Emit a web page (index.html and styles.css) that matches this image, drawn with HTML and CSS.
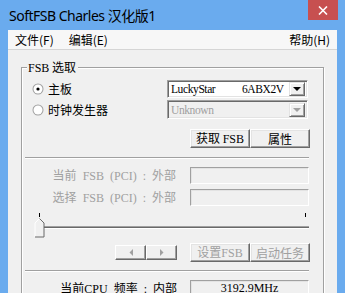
FILE: index.html
```html
<!DOCTYPE html>
<html lang="zh-CN">
<head>
    <meta charset="UTF-8">
    <title>SoftFSB Charles 汉化版1</title>
    <link rel="stylesheet" href="styles.css">
</head>
<body>
    <div class="window">
        <!-- Title bar -->
        <div class="titlebar">
            <span class="title">SoftFSB Charles 汉化版1</span>
            <span class="close">
                <svg width="10" height="9" viewBox="0 0 10 9"><path d="M1 0.5 L9 8.5 M9 0.5 L1 8.5" stroke="#fff" stroke-width="1.6"/></svg>
            </span>
        </div>

        <div class="client">
            <!-- Menu -->
            <div class="menubar">
                <span class="menu-item">文件(F)</span>
                <span class="menu-item">编辑(E)</span>
                <span class="menu-item help">帮助(H)</span>
            </div>

            <!-- FSB group -->
            <div class="group">
                <span class="legend"><span class="m">FSB</span> 选取</span>

                <div class="row row-first">
                    <label class="opt">
                        <svg class="radio" width="12" height="12" viewBox="0 0 12 12">
                            <circle cx="6" cy="6" r="5.5" fill="#a0a0a0"/>
                            <circle cx="6" cy="6" r="4.5" fill="#fff"/>
                            <circle cx="6" cy="6" r="1.6" fill="#000"/>
                        </svg>
                        主板
                    </label>
                    <div class="combo">
                        <span class="combo-text m"><span class="board">LuckyStar</span>6ABX2V</span>
                        <span class="combo-btn"><span class="arrow"></span></span>
                    </div>
                </div>

                <div class="row row-second">
                    <label class="opt">
                        <svg class="radio" width="12" height="12" viewBox="0 0 12 12">
                            <circle cx="6" cy="6" r="5.5" fill="#a0a0a0"/>
                            <circle cx="6" cy="6" r="4.5" fill="#fff"/>
                        </svg>
                        时钟发生器
                    </label>
                    <div class="combo disabled">
                        <span class="combo-text m">Unknown</span>
                        <span class="combo-btn"><span class="arrow"></span></span>
                    </div>
                </div>

                <div class="btn-row">
                    <button class="btn">获取 <span class="m">FSB</span></button>
                    <button class="btn">属性</button>
                </div>

                <div class="sep"></div>

                <div class="field-row first">
                    <span class="label">当前<span class="m"> FSB (PCI) : </span>外部</span>
                    <span class="field"></span>
                </div>
                <div class="field-row">
                    <span class="label">选择<span class="m"> FSB (PCI) : </span>外部</span>
                    <span class="field"></span>
                </div>

                <svg class="slider" width="290" height="25" viewBox="0 0 290 25">
                    <rect x="17" y="0" width="1" height="4" fill="#000"/>
                    <rect x="283" y="0" width="1" height="4" fill="#000"/>
                    <rect x="15" y="13" width="272" height="1" fill="#a0a0a0"/>
                    <rect x="15" y="14" width="272" height="1" fill="#696969"/>
                    <rect x="15" y="15" width="272" height="1" fill="#fff"/>
                    <polygon points="13,10 17.5,5.5 22,10 22,24 13,24" fill="#f0f0f0"/>
                    <polyline points="13,24 13,10 17.5,5.5" fill="none" stroke="#fff" stroke-width="1"/>
                    <polyline points="17.5,5.5 22,10 22,24 13,24" fill="none" stroke="#696969" stroke-width="1"/>
                </svg>

                <div class="nav-row">
                    <div class="nav">
                        <button class="small-btn">
                            <svg width="4" height="7" viewBox="0 0 4 7"><polygon points="4,0 4,7 0.5,3.5" fill="#a0a0a0"/></svg>
                        </button>
                        <button class="small-btn">
                            <svg width="4" height="7" viewBox="0 0 4 7"><polygon points="0,0 0,7 3.5,3.5" fill="#a0a0a0"/></svg>
                        </button>
                    </div>
                    <button class="btn off">设置<span class="m">FSB</span></button>
                    <button class="btn off">启动任务</button>
                </div>

                <div class="sep sep-low"></div>

                <div class="field-row cpu">
                    <span class="label">当前<span class="m">CPU </span>频率<span class="m"> : </span>内部</span>
                    <span class="field value m">3192.9MHz</span>
                </div>
            </div>
        </div>
    </div>
</body>
</html>
```

FILE: styles.css
```css
body {
    margin: 0;
    padding: 0;
    background: #6aabee;
    font-family: "Noto Sans CJK SC", sans-serif;
}

.window {
    width: 345px;
    height: 293px;
    background: #6aabee;
    overflow: hidden;
    display: flex;
    flex-direction: column;
}

/* Title bar */
.titlebar {
    height: 30px;
    display: flex;
    flex-shrink: 0;
}

.title {
    padding-left: 9px;
    line-height: 31px;
    font-size: 14px;
    color: #000;
    font-family: "Noto Sans", "Noto Sans CJK SC", sans-serif;
    letter-spacing: -0.5px;
}

.close {
    margin-left: auto;
    margin-right: 7px;
    width: 30px;
    height: 20px;
    background: #c75050;
    display: flex;
    align-items: center;
    justify-content: center;
}

/* Client area */
.client {
    margin: 0 8px;
    flex: 1;
    background: #f0f0f0;
    overflow: hidden;
}

.menubar {
    height: 19px;
    background: #f7f7f7;
    border-bottom: 1px solid #d5d5d5;
    display: flex;
    align-items: center;
    padding: 0 7px 0 7px;
    font-size: 12px;
    color: #000;
}

.menu-item {
    margin-right: 15px;
    line-height: 19px;
}

.menu-item.help {
    margin-left: auto;
    margin-right: 0;
}

/* Latin text of the dialog (SimSun-like serif) */
.m {
    font-family: "Liberation Serif", serif;
    font-size: 12px;
    word-spacing: 3px;
}

/* Group box */
.group {
    position: relative;
    margin: 17px 0 0 13px;
    width: 301px;
    height: 260px;
    border: 1px solid #a0a0a0;
    box-shadow: inset 1px 1px 0 #fff, 1px 1px 0 #fff;
    font-size: 12px;
    color: #000;
}

.legend {
    position: absolute;
    top: -9px;
    left: 5px;
    padding: 0 2px 0 1px;
    background: #f0f0f0;
    line-height: 16px;
}

.row {
    display: flex;
    align-items: center;
}

.row-first {
    margin-top: 12px;
    height: 18px;
}

.row-second {
    margin-top: 2px;
    height: 19px;
}

.opt {
    width: 145px;
    padding-left: 10px;
    box-sizing: border-box;
    display: flex;
    align-items: center;
    font-size: 12px;
    line-height: 14px;
}

.radio {
    margin-right: 4px;
}

/* Combo box */
.combo {
    width: 141px;
    height: 100%;
    box-sizing: border-box;
    border: 1px solid;
    border-color: #a0a0a0 #fff #fff #a0a0a0;
    box-shadow: inset 1px 1px 0 #696969, inset -1px -1px 0 #e3e3e3;
    background: #fff;
    display: flex;
    align-items: center;
    padding: 0 2px 0 3px;
}

.combo.disabled {
    background: #f0f0f0;
    color: #a0a0a0;
}

.combo-text {
    flex: 1;
    white-space: pre;
    line-height: 14px;
    font-size: 11.5px;
    letter-spacing: -0.4px;
}

.board {
    display: inline-block;
    width: 71px;
}

.combo-btn {
    width: 16px;
    height: 14px;
    box-sizing: border-box;
    border: 1px solid;
    border-color: #e3e3e3 #696969 #696969 #e3e3e3;
    box-shadow: inset 1px 1px 0 #fff, inset -1px -1px 0 #a0a0a0;
    background: #f0f0f0;
    display: flex;
    align-items: center;
    justify-content: center;
}

.arrow {
    width: 0;
    height: 0;
    border-left: 4px solid transparent;
    border-right: 4px solid transparent;
    border-top: 4px solid #000;
}

.disabled .arrow {
    border-top-color: #a0a0a0;
}

/* Buttons */
.btn-row {
    margin-top: 10px;
    padding-left: 168px;
    display: flex;
}

.btn {
    width: 60px;
    height: 19px;
    padding: 0;
    margin: 0;
    background: #f0f0f0;
    border: 1px solid;
    border-color: #fff #696969 #696969 #fff;
    box-shadow: inset -1px -1px 0 #a0a0a0, inset 1px 1px 0 #e3e3e3;
    font-family: "Noto Sans CJK SC", sans-serif;
    font-size: 12px;
    line-height: 15px;
    color: #000;
}

.btn.off {
    color: #a0a0a0;
}

.sep {
    margin: 9px 0 0 3px;
    width: 284px;
    border-top: 1px solid #a0a0a0;
    border-bottom: 1px solid #fff;
}

.sep-low {
    margin-top: 8px;
}

/* Read-only fields */
.field-row {
    display: flex;
    align-items: center;
    height: 17px;
    margin-top: 5px;
    color: #a0a0a0;
}

.field-row.first {
    margin-top: 8px;
}

.label {
    width: 154px;
    text-align: right;
    white-space: pre;
    line-height: 14px;
}

.field {
    margin-left: 14px;
    width: 119px;
    height: 100%;
    box-sizing: border-box;
    border: 1px solid;
    border-color: #a0a0a0 #fff #fff #a0a0a0;
    box-shadow: inset 1px 1px 0 #e3e3e3;
}

.field-row.cpu {
    margin-top: 8px;
    height: 18px;
    color: #000;
    align-items: flex-start;
}

.field-row.cpu .label {
    width: 155px;
    padding-top: 1px;
}

.field-row.cpu .field {
    margin-left: 13px;
}

.value {
    text-align: center;
    line-height: 14px;
    color: #000;
}

/* Trackbar */
.slider {
    display: block;
    margin-top: 7px;
}

.nav-row {
    margin-top: 5px;
    display: flex;
    align-items: center;
}

.nav {
    width: 168px;
    padding-left: 93px;
    box-sizing: border-box;
    display: flex;
}

.small-btn {
    width: 31px;
    height: 15px;
    padding: 0;
    margin: 0;
    background: #f0f0f0;
    border: 1px solid;
    border-color: #fff #696969 #696969 #fff;
    box-shadow: inset -1px -1px 0 #a0a0a0;
    display: flex;
    align-items: center;
    justify-content: center;
}
```
